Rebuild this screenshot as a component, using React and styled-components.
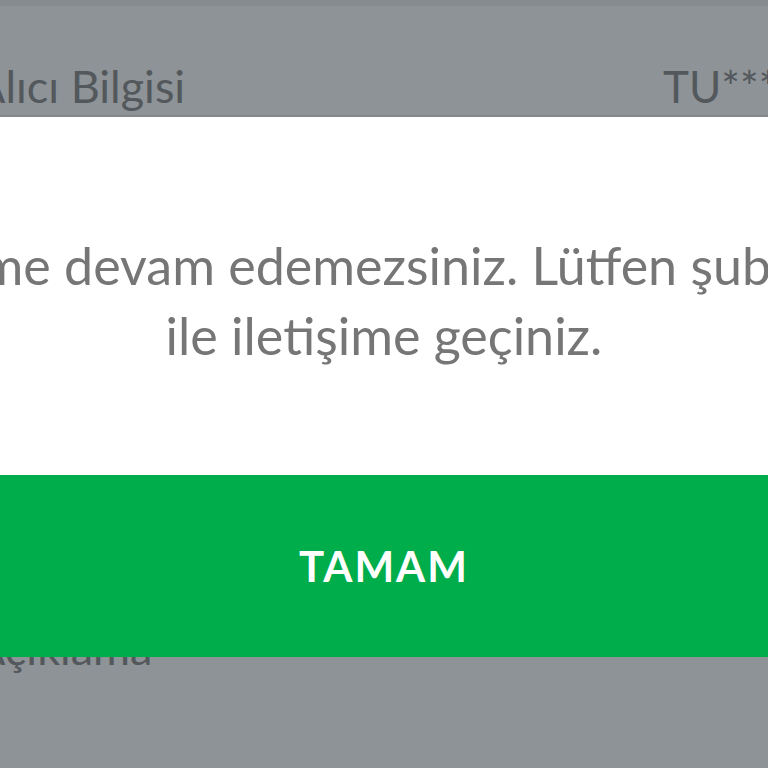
import React from "react";
import styled, { createGlobalStyle } from "styled-components";

const Global = createGlobalStyle`
  html, body { margin: 0; padding: 0; }
  body {
    width: 768px;
    height: 768px;
    overflow: hidden;
    background: #8e9397;
    font-family: Lato, "Noto Sans", sans-serif;
  }
  #root { height: 768px; }
`;

const Screen = styled.div`
  position: relative;
  width: 768px;
  height: 768px;
  overflow: hidden;
  background: #8e9397;
`;

const StatusStrip = styled.div`
  height: 6px;
  background: #878b8f;
`;

const InfoRow = styled.div`
  display: grid;
  grid-template-columns: 688px 1fr;
  margin-left: -25px;
  height: ${(p) => p.$height}px;
  padding-top: ${(p) => p.$top}px;
  box-sizing: border-box;
  border-bottom: ${(p) => (p.$divider ? "2px solid #83888c" : "none")};
  white-space: nowrap;
`;

const Label = styled.span`
  font-size: 45px;
  line-height: 44px;
  color: #53585c;
  font-weight: 400;
`;

const Value = styled.span`
  font-size: 44px;
  line-height: 44px;
  color: #53585c;
`;

const Dialog = styled.div`
  position: absolute;
  top: 117px;
  left: 0;
  right: 0;
  display: flex;
  flex-direction: column;
`;

const Body = styled.div`
  height: 358px;
  box-sizing: border-box;
  padding-top: 8px;
  background: #ffffff;
  display: flex;
  flex-direction: column;
  align-items: center;
  justify-content: center;
  overflow: visible;
`;

const Line = styled.div`
  font-size: 52px;
  line-height: 70px;
  color: #767676;
  white-space: nowrap;
  text-align: center;
`;

const OkButton = styled.button`
  height: 182px;
  border: none;
  margin: 0;
  padding: 0;
  background: #00ad4b;
  color: #ffffff;
  font-family: Lato, "Noto Sans", sans-serif;
  font-weight: 700;
  font-size: 42px;
  letter-spacing: 2px;
  display: flex;
  align-items: center;
  justify-content: center;
`;

export default function App() {
  return (
    <Screen>
      <Global />
      <StatusStrip />
      <InfoRow $height={111} $top={58} $divider>
        <Label>Alıcı Bilgisi</Label>
        <Value>TU*** ****</Value>
      </InfoRow>
      <InfoRow $height={200} $top={509}>
        <Label>Açıklama</Label>
        <Value></Value>
      </InfoRow>
      <Dialog>
        <Body>
          <Line>İşleme devam edemezsiniz. Lütfen şubeniz</Line>
          <Line>ile iletişime geçiniz.</Line>
        </Body>
        <OkButton>TAMAM</OkButton>
      </Dialog>
    </Screen>
  );
}
